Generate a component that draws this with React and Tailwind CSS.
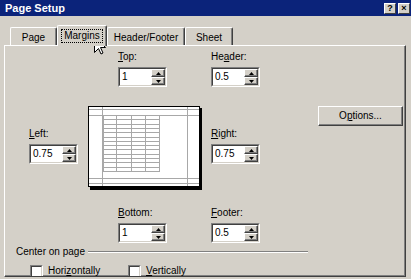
import React from 'react';

const SpinEdit = ({ value, width = 'w-[49px]' }) => (
  <div className={`${width} h-[20px] border border-t-[#808080] border-l-[#808080] border-b-white border-r-white`}>
    <div className="flex h-full border border-t-[#404040] border-l-[#404040] border-b-[#d4d0c8] border-r-[#d4d0c8] bg-white">
      <span className="flex-1 pl-[2px] text-[10px] leading-[16px] text-black">{value}</span>
      <div className="flex w-[14px] flex-col">
        {['up', 'down'].map((dir) => (
          <div
            key={dir}
            className="flex h-[8px] items-center justify-center border border-t-white border-l-white border-b-[#404040] border-r-[#404040] bg-[#d4d0c8] shadow-[inset_-1px_-1px_0_#808080]"
          >
            <svg width="5" height="3" viewBox="0 0 5 3">
              {dir === 'up' ? <path d="M2.5 0 L5 3 L0 3 Z" fill="#000" /> : <path d="M0 0 L5 0 L2.5 3 Z" fill="#000" />}
            </svg>
          </div>
        ))}
      </div>
    </div>
  </div>
);

const Field = ({ hot, rest, before = '', value, className = '' }) => (
  <div className={className}>
    <div className="text-[10px] leading-[12px] text-black">
      {before}
      <span className="underline underline-offset-1">{hot}</span>
      {rest}
    </div>
    <div className="mt-[4px]">
      <SpinEdit value={value} />
    </div>
  </div>
);

const Checkbox = ({ children }) => (
  <div className="flex items-start">
    <div className="h-[13px] w-[13px] flex-none border border-t-[#808080] border-l-[#808080] border-b-white border-r-white">
      <div className="h-full w-full border border-t-[#404040] border-l-[#404040] border-b-[#d4d0c8] border-r-[#d4d0c8] bg-white" />
    </div>
    <span className="ml-[5px] text-[10px] leading-[12px] text-black">{children}</span>
  </div>
);

const Preview = () => {
  const rows = [];
  for (let i = 0; i <= 13; i++) rows.push(9 + i * 4.3);
  return (
    <svg width="114" height="84" viewBox="0 0 114 84" className="block">
      <rect x="2" y="2" width="112" height="82" fill="#000" />
      <rect x="0.5" y="0.5" width="111" height="80" fill="#fff" stroke="#000" />
      <g stroke="#a8a8a8" strokeWidth="1" shapeRendering="crispEdges">
        <line x1="14.5" y1="1" x2="14.5" y2="80" />
        <line x1="99.5" y1="1" x2="99.5" y2="80" />
        <line x1="1" y1="3.5" x2="111" y2="3.5" />
        <line x1="1" y1="9.5" x2="111" y2="9.5" />
        <line x1="1" y1="72.5" x2="111" y2="72.5" />
        <line x1="1" y1="77.5" x2="111" y2="77.5" />
        {rows.map((y, i) => (
          <line key={i} x1="15" y1={Math.round(y) + 0.5} x2="71" y2={Math.round(y) + 0.5} />
        ))}
        {[15.5, 28.5, 43.5, 57.5, 71.5].map((x) => (
          <line key={x} x1={x} y1="9.5" x2={x} y2="65.5" />
        ))}
      </g>
    </svg>
  );
};

const Tab = ({ children, selected, width }) =>
  selected ? (
    <div
      className={`${width} relative z-10 -mb-px flex h-[21px] justify-center rounded-t-[2px] border-l border-t border-r border-l-white border-t-white border-r-[#404040] bg-[#d4d0c8] pt-[3px] shadow-[inset_-1px_0_0_#808080]`}
    >
      <span className="h-[14px] border border-dotted border-black px-[2px] text-[10px] leading-[12px] text-black">{children}</span>
    </div>
  ) : (
    <div
      className={`${width} flex h-[18px] justify-center rounded-t-[2px] border-l border-t border-r border-l-white border-t-white border-r-[#404040] bg-[#d4d0c8] pt-[4px] shadow-[inset_-1px_0_0_#808080]`}
    >
      <span className="text-[10px] leading-[12px] text-black">{children}</span>
    </div>
  );

export default function App() {
  return (
    <div className="relative flex h-[279px] w-[411px] flex-col overflow-hidden bg-[#d4d0c8] font-['Liberation_Sans',Arial,sans-serif]">
      <div className="flex h-[16px] flex-none items-center bg-[#0b237a]">
        <span className="ml-[5px] text-[11px] font-bold leading-[16px] text-white">Page Setup</span>
        <div className="ml-auto mr-[1px] flex gap-[2px]">
          <div className="flex h-[11px] w-[12px] items-center justify-center border border-t-white border-l-white border-b-[#404040] border-r-[#404040] bg-[#d4d0c8] text-[9px] font-bold leading-none text-black">
            ?
          </div>
          <div className="flex h-[11px] w-[12px] items-center justify-center border border-t-white border-l-white border-b-[#404040] border-r-[#404040] bg-[#d4d0c8] text-[9px] font-bold leading-none text-black">
            ×
          </div>
        </div>
      </div>

      <div className="mt-[9px] flex items-end pl-[10px]">
        <Tab width="w-[47px]">Page</Tab>
        <Tab width="w-[50px]" selected>
          Margins
        </Tab>
        <Tab width="w-[78px]">Header/Footer</Tab>
        <Tab width="w-[48px]">Sheet</Tab>
      </div>

      <div className="ml-[4px] h-[232px] w-[402px] flex-none overflow-hidden border border-t-white border-l-white border-b-[#404040] border-r-[#404040] shadow-[inset_-1px_-1px_0_#808080]">
        <div className="mt-[5px] flex pl-[113px]">
          <Field className="w-[49px]" hot="T" rest="op:" value="1" />
          <Field className="ml-[44px] w-[51px]" before="He" hot="a" rest="der:" value="0.5" />
        </div>

        <div className="mt-[19px] flex items-start">
          <Field className="ml-[24px] mt-[22px] w-[50px]" hot="L" rest="eft:" value="0.75" />
          <div className="ml-[9px]">
            <Preview />
          </div>
          <Field className="ml-[9px] mt-[22px] w-[51px]" hot="R" rest="ight:" value="0.75" />
          <button className="ml-[56px] flex h-[20px] w-[85px] items-center justify-center border border-t-white border-l-white border-b-[#404040] border-r-[#404040] bg-[#d4d0c8] text-[10px] leading-[12px] text-black shadow-[inset_-1px_-1px_0_#808080]">
            O<span className="underline underline-offset-1">p</span>tions...
          </button>
        </div>

        <div className="mt-[17px] flex pl-[113px]">
          <Field className="w-[49px]" hot="B" rest="ottom:" value="1" />
          <Field className="ml-[44px] w-[51px]" hot="F" rest="ooter:" value="0.5" />
        </div>

        <div className="ml-[11px] mt-[3px] flex w-[292px] items-center">
          <span className="text-[10px] leading-[12px] text-black">Center on page</span>
          <div className="ml-[3px] h-[2px] flex-1 border-t border-b border-t-[#808080] border-b-white" />
        </div>

        <div className="ml-[25px] mt-[7px] flex">
          <div className="w-[98px]">
            <Checkbox>
              Hori<span className="underline">z</span>ontally
            </Checkbox>
          </div>
          <Checkbox>
            <span className="underline">V</span>ertically
          </Checkbox>
        </div>
      </div>

      <svg className="absolute left-[94px] top-[36px]" width="12" height="19" viewBox="0 0 12 19">
        <path d="M0.5 0.5 L0.5 16.5 L4.5 12.5 L7 18 L9 17 L6.5 11.5 L11.5 11.5 Z" fill="#fff" stroke="#000" strokeWidth="1" />
      </svg>
    </div>
  );
}
